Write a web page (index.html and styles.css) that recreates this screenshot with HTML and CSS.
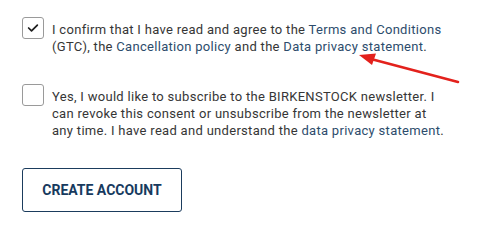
FILE: index.html
```html
<!DOCTYPE html>
<html lang="en">
<head>
<meta charset="utf-8">
<title>Create account</title>
<link rel="stylesheet" href="styles.css">
</head>
<body>
<form class="consent-form">
  <label class="consent">
    <span class="box box--checked">
      <svg viewBox="0 0 22 22" width="20" height="20" aria-hidden="true"><path d="M6.2 11 L9.4 14.2 L15.8 7.8" fill="none" stroke="#1e1e1e" stroke-width="1.9" stroke-linecap="round" stroke-linejoin="round"/></svg>
    </span>
    <span class="consent-text">I confirm that I have read and agree to the <a href="#">Terms and Conditions</a> (GTC), the <a href="#">Cancellation policy</a> and the <a href="#">Data privacy statement</a>.</span>
  </label>
  <label class="consent">
    <span class="box"></span>
    <span class="consent-text">Yes, I would like to subscribe to the BIRKENSTOCK newsletter. I can revoke this consent or unsubscribe from the newsletter at any time. I have read and understand the <a href="#">data privacy statement</a>.</span>
  </label>
  <button type="button" class="btn-primary">CREATE ACCOUNT</button>
</form>
<svg class="annotation" width="478" height="232" viewBox="0 0 478 232" aria-hidden="true">
  <line x1="458" y1="82" x2="371" y2="59" stroke="#e3211c" stroke-width="2.6" stroke-linecap="round"/>
  <polygon points="359,55 376,53.5 372,65" fill="#e3211c"/>
</svg>
</body>
</html>
```
FILE: styles.css
```css
html, body {
  margin: 0;
  padding: 0;
  background: #fff;
}
body {
  width: 478px;
  height: 232px;
  position: relative;
  overflow: hidden;
  font-family: Roboto, "Liberation Sans", sans-serif;
  color: #363636;
}
.consent-form {
  display: flex;
  flex-direction: column;
  align-items: flex-start;
  gap: 29px;
  padding: 17px 0 0 22px;
}
.consent {
  display: flex;
  align-items: flex-start;
  gap: 8px;
}
.box {
  flex: none;
  box-sizing: border-box;
  width: 22px;
  height: 22px;
  border: 1px solid #9a9a9a;
  border-radius: 3px;
  display: flex;
  align-items: center;
  justify-content: center;
  background: #fff;
}
.consent-text {
  width: 396px;
  padding-top: 4px;
  font-size: 13px;
  line-height: 17px;
  letter-spacing: 0.3px;
}
.consent-text a {
  color: #2d4c6c;
  text-decoration: none;
}
.btn-primary {
  box-sizing: border-box;
  width: 160px;
  height: 44px;
  border: 1px solid #1b3c5d;
  border-radius: 3px;
  background: #fff;
  color: #173a5e;
  font-family: Roboto, "Liberation Sans", sans-serif;
  font-weight: 700;
  font-size: 14px;
  padding: 0;
}
.annotation {
  position: absolute;
  left: 0;
  top: 0;
  pointer-events: none;
}
```
